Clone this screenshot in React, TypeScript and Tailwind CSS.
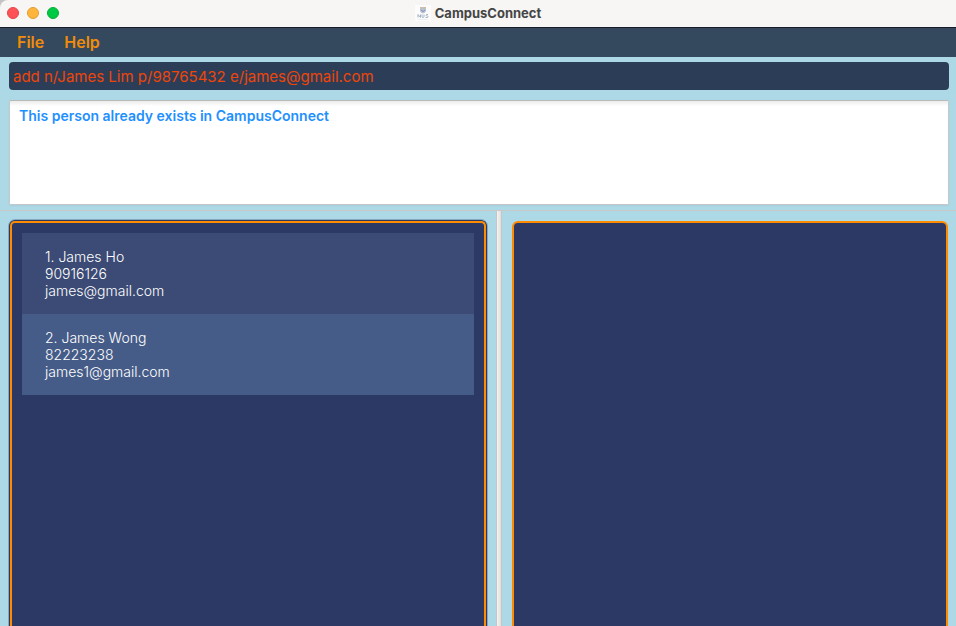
import React from "react";

type Person = { id: number; name: string; phone: string; email: string };

const people: Person[] = [
  { id: 1, name: "James Ho", phone: "90916126", email: "james@gmail.com" },
  { id: 2, name: "James Wong", phone: "82223238", email: "james1@gmail.com" },
];

function Crest() {
  return (
    <svg viewBox="0 0 16 16" className="size-4" aria-hidden="true">
      <rect width="16" height="16" fill="#fcfcfc" />
      <path d="M5 2h6v3.5c0 1.5-1.5 2.5-3 3-1.5-.5-3-1.5-3-3z" fill="#b9c3d5" />
      <path d="M5 2h2v1.5H5zM9 2h2v1.5H9z" fill="#d9b998" />
      <path d="M6 5l2 1.5L10 5" stroke="#7f93b3" fill="none" />
      <path
        d="M3 12.5v-3l2.5 3v-3M7 9.5v2q0 1 1 1t1-1v-2M13 9.5h-1.5q-1 .7 0 1.4h1q1 .8 0 1.6h-2"
        stroke="#a6b2c6"
        fill="none"
      />
      <path d="M3 14.5h10" stroke="#e4e6ea" strokeWidth=".6" />
    </svg>
  );
}

function TitleBar() {
  return (
    <header className="relative flex h-7 shrink-0 items-center justify-center rounded-tl-lg border-b border-[#161d29] bg-[#f7f6f4] pb-[2px]">
      <div className="absolute left-[7px] flex gap-2">
        <button aria-label="Close" className="size-3 rounded-full border border-[#e2434a] bg-[#ff5257]" />
        <button aria-label="Minimize" className="size-3 rounded-full border border-[#e09e33] bg-[#ffb53c]" />
        <button aria-label="Zoom" className="size-3 rounded-full border border-[#06ad35] bg-[#00c943]" />
      </div>
      <div className="flex items-center gap-1">
        <Crest />
        <h1 className="text-[13px] leading-4 font-bold text-[#454545]">CampusConnect</h1>
      </div>
    </header>
  );
}

function PersonRow({ person }: { person: Person }) {
  return (
    <li className="px-[23px] py-[15px] text-sm leading-[17px] font-light text-white odd:bg-[#3c4b75] even:bg-[#465c88]">
      <p>
        {person.id}. {person.name}
      </p>
      <p>{person.phone}</p>
      <p>{person.email}</p>
    </li>
  );
}

export default function App() {
  return (
    <div className="h-screen overflow-hidden bg-[#c3c3c6] font-['Inter','Liberation_Sans',sans-serif]">
      <div className="flex h-full flex-col">
        <TitleBar />
        <nav className="flex h-[29px] shrink-0 items-center gap-5 bg-[#34495e] px-[17px] pb-[2px] text-base font-semibold text-[#f08c0a]">
          <button>File</button>
          <button>Help</button>
        </nav>
        <main className="flex min-h-0 flex-1 flex-col bg-[#add8e6]">
          <div className="flex shrink-0 flex-col gap-[10px] pt-[5px] pr-[7px] pb-[5px] pl-[9px]">
            <input
              aria-label="Command"
              defaultValue="add n/James Lim p/98765432 e/james@gmail.com"
              className="h-7 w-full rounded bg-[#2c3e57] px-1 text-[15px] text-[#ef4509] outline-none"
            />
            <textarea
              aria-label="Result"
              readOnly
              defaultValue="This person already exists in CampusConnect"
              className="block h-[105px] w-full resize-none rounded-xs border border-[#c4c8c9] border-t-[#b9b9b9] bg-white bg-linear-to-b from-[#ececec] to-white to-5% px-[9px] py-1 text-sm leading-[22px] font-semibold text-[#1e90ff] shadow-xs outline-none"
            />
          </div>
          <div className="flex min-h-0 flex-1 border-t border-[#c8c8c8]">
            <section aria-label="Persons" className="flex w-[496px] shrink grow pt-[9px] pr-[9px] pl-[9px]">
              <div className="flex flex-1 rounded-t-md border-x border-t border-[#2c3965] bg-[#2c3965] outline outline-[#2c3965]/30">
                <div className="flex-1 rounded-t-[5px] border-x-2 border-t-2 border-[#ff8c00] p-[10px]">
                  <ul>
                    {people.map((person) => (
                      <PersonRow key={person.id} person={person} />
                    ))}
                  </ul>
                </div>
              </div>
            </section>
            <div className="w-[6px] shrink-0 border-x border-[#c6c6c6] bg-linear-to-r from-[#f4f4f4] to-[#dedede]" />
            <section aria-label="Details" className="flex w-[454px] shrink grow pt-[10px] pr-2 pl-[10px]">
              <div className="flex-1 rounded-t-md border-x-2 border-t-2 border-[#ff8c00] bg-[#2c3965]" />
            </section>
          </div>
        </main>
      </div>
    </div>
  );
}
